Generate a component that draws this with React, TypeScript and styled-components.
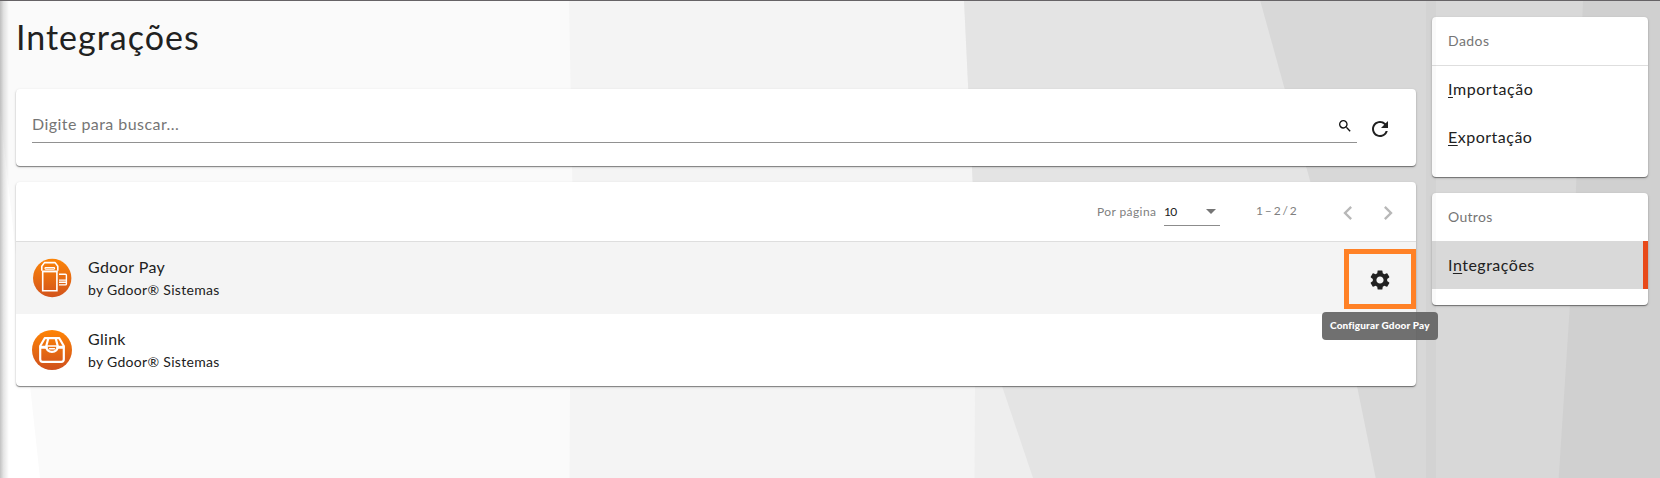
import React from "react";
import styled, { createGlobalStyle } from "styled-components";
import {
  MdArrowDropDown,
  MdChevronLeft,
  MdChevronRight,
  MdRefresh,
  MdSearch,
  MdSettings,
} from "react-icons/md";

const GlobalStyle = createGlobalStyle`
  * { box-sizing: border-box; }
  body {
    margin: 0;
    overflow: hidden;
    font-family: Lato, "Open Sans", sans-serif;
    color: #212121;
  }
`;

const Page = styled.div`
  position: relative;
  width: 1660px;
  height: 478px;
  overflow: hidden;
  border-top: 1px solid #666366;
  background: #fff;
`;

const Backdrop = styled.svg`
  position: absolute;
  top: -1px;
  left: 0;
  display: block;
`;

const EdgeShadow = styled.div`
  position: absolute;
  inset: 0 auto 0 0;
  width: 9px;
  background: linear-gradient(to right, rgba(0, 0, 0, 0.24), rgba(0, 0, 0, 0.1) 40%, rgba(0, 0, 0, 0));
`;

const SideShade = styled.div`
  position: absolute;
  top: 0;
  bottom: 0;
  left: 1426px;
  width: 10px;
  background: rgba(0, 0, 0, 0.018);
  pointer-events: none;
`;

const Columns = styled.div`
  position: relative;
  display: flex;
  gap: 16px;
  padding: 0 12px 0 16px;
`;

const Main = styled.main`
  width: 1400px;
  display: flex;
  flex-direction: column;
  gap: 16px;
`;

const Side = styled.aside`
  width: 216px;
  padding-top: 16px;
  display: flex;
  flex-direction: column;
  gap: 16px;
`;

const Text = styled.span<{ $size: number; $track?: number; $color?: string; $bold?: boolean }>`
  font-size: ${(p) => p.$size}px;
  line-height: 20px;
  letter-spacing: ${(p) => p.$track ?? 0}px;
  color: ${(p) => p.$color ?? "#212121"};
  font-weight: ${(p) => (p.$bold ? 900 : 400)};
  white-space: nowrap;
`;

const Title = styled.h1`
  margin: 0;
  height: 72px;
  padding: 16px 0 0;
  font-size: 34px;
  font-weight: 400;
  line-height: 40px;
  letter-spacing: 1px;
`;

const Card = styled.section`
  background: #fff;
  border-radius: 4px;
  box-shadow: 0 1px 1px rgba(0, 0, 0, 0.42), 0 1px 3px rgba(0, 0, 0, 0.16);
`;

const SearchCard = styled(Card)`
  height: 77px;
  padding: 20px 16px 0;
  display: flex;
`;

const SearchField = styled.div`
  width: 1325px;
  height: 34px;
  display: flex;
  justify-content: space-between;
  align-items: flex-start;
  padding: 5px 4px 0 0;
  border-bottom: 1px solid #919191;

  svg {
    margin-top: 4px;
  }
`;

const IconButton = styled.button<{ $left: number; $top: number }>`
  display: flex;
  align-self: flex-start;
  margin: ${(p) => p.$top}px 0 0 ${(p) => p.$left}px;
  padding: 0;
  border: 0;
  background: none;
  color: inherit;
`;

const Pager = styled.div`
  height: 60px;
  display: flex;
  justify-content: flex-end;
  align-items: flex-start;
  padding: 0 8px 0 0;
  border-bottom: 1px solid #dedede;
  color: #b8b8b8;
`;

const PagerLabel = styled.div`
  width: 67px;
  margin-top: 18px;
  line-height: 20px;
`;

const PageSize = styled.div`
  width: 56px;
  height: 26px;
  margin-top: 18px;
  display: flex;
  justify-content: space-between;
  border-bottom: 1px solid #8c8c8c;
  color: #757575;

  ${Text} {
    padding-top: 2px;
  }

  svg {
    margin: -1px -3px 0 0;
  }
`;

const Range = styled.div`
  width: 72px;
  margin: 17px 0 0 36px;
  line-height: 20px;
`;

const PagerArrow = styled.div`
  display: flex;
  width: 40px;
  margin-top: 17px;
  justify-content: center;
`;

const Row = styled.div<{ $active?: boolean }>`
  height: 72px;
  display: flex;
  align-items: center;
  padding-left: 16px;
  background: ${(p) => (p.$active ? "#f4f4f4" : "transparent")};
  border-radius: ${(p) => (p.$active ? "0" : "0 0 4px 4px")};
`;

const RowText = styled.div`
  flex: 1;
  display: flex;
  flex-direction: column;
  gap: 3px;
  margin-left: 16px;
  padding-top: 1px;
`;

const ActionHighlight = styled.div`
  position: relative;
  width: 72px;
  height: 60px;
  margin-top: 2px;
  padding-top: 2px;
  display: flex;
  align-items: center;
  justify-content: center;
  border: 5px solid #ff8126;
`;

const Tooltip = styled.div`
  position: absolute;
  z-index: 2;
  top: 58px;
  left: -27px;
  width: 116px;
  height: 28px;
  padding: 1px 0 0 8px;
  border-radius: 4px;
  background: rgba(97, 97, 97, 0.9);
`;

const SideHeader = styled.header<{ $line?: boolean }>`
  height: ${(p) => (p.$line ? 49 : 48)}px;
  padding: 13px 16px 0;
  line-height: 20px;
  border-bottom: ${(p) => (p.$line ? "1px solid #dedede" : "none")};
`;

const SideItem = styled.div<{ $active?: boolean }>`
  height: 48px;
  padding: ${(p) => (p.$active ? 14 : 13)}px 16px 0;
  line-height: 20px;
  background: ${(p) => (p.$active ? "#d9d9d9" : "transparent")};
  border-right: ${(p) => (p.$active ? "5px solid #e84a1a" : "none")};

  u {
    text-underline-offset: 1.5px;
    text-decoration-thickness: 1px;
    text-decoration-skip-ink: none;
  }
`;

const SideCard = styled(Card)<{ $height: number }>`
  height: ${(p) => p.$height}px;
`;

const PayLogo = () => (
  <svg width="40" height="40" viewBox="0 0 40 40">
    <defs>
      <linearGradient id="pay" x1="0" y1="0" x2="0" y2="1">
        <stop offset="0" stopColor="#fc8508" />
        <stop offset="1" stopColor="#d2531c" />
      </linearGradient>
    </defs>
    <circle cx="20.2" cy="20" r="19.2" fill="url(#pay)" />
    <g fill="none" stroke="#fff" strokeWidth="1.6">
      <path d="M10.7 13.5h14.2v19.3H10.7z" />
      <path d="M9.8 12.8V8.3l2.7-3.7h10.6l2.7 3.7v4.5" strokeLinejoin="round" />
      <path d="M10.2 13.4h15.2" />
      <rect x="13" y="9.6" width="9.6" height="1.6" rx=".6" strokeWidth="1.1" />
      <path d="M27 16.3h6.4q1 0 1 1v8.6q0 1-1 1H27M27 22.1h7.4M27 24.3h7.4" strokeWidth="1.4" />
    </g>
  </svg>
);

const LinkLogo = () => (
  <svg width="40" height="40" viewBox="0 0 40 40">
    <defs>
      <linearGradient id="link" x1="0" y1="0" x2="0" y2="1">
        <stop offset="0" stopColor="#ff8505" />
        <stop offset="1" stopColor="#cf501d" />
      </linearGradient>
    </defs>
    <circle cx="20" cy="20" r="20" fill="url(#link)" />
    <g fill="none" stroke="#fff" strokeWidth="2.2" strokeLinejoin="round" strokeLinecap="round">
      <path d="M12.7 8.2h14.6l4.5 7.8v13.3q0 2.6-2.6 2.6H10.8q-2.6 0-2.6-2.6V16z" />
      <path d="M9 17.2h5.3M25.7 17.2H31" strokeWidth="3" />
      <path d="M16.2 8.7l-2 7.6q.4 5.5 5.8 5.5t5.8-5.5l-2-7.6" />
      <path d="M14.5 16h11M17.5 18.8h5" strokeWidth="1.5" />
    </g>
  </svg>
);

export default function App() {
  return (
    <Page>
      <GlobalStyle />
      <Backdrop width="1660" height="478" viewBox="0 0 1660 478">
        <path fill="#fafafa" d="M0 0H1660V478H40L10 200 0 110z" />
        <path fill="#f4f4f4" d="M569 0H1660V478H569.5L570 386 573 220z" />
        <path fill="#eee" d="M964 0H1660V478H974.500L975 386 973.500 200z" />
        <path fill="#e4e4e4" d="M964 0H1660V478H1033L975 306 973.500 200z" />
        <path fill="#d8d8d8" d="M1260 0H1660V478H1375.700L1357 386 1332 260z" />
        <path fill="#d0d0d0" d="M1583 0H1660V478H1558.700L1574 242z" />
        <path fill="#666366" d="M0 0H1660V1H0z" />
      </Backdrop>
      <EdgeShadow />
      <Columns>
        <Main>
          <Title>Integrações</Title>
          <SearchCard>
            <SearchField>
              <Text $size={16} $track={0.45} $color="#757575">Digite para buscar...</Text>
              <MdSearch size={16} color="#111" />
            </SearchField>
            <IconButton $left={11} $top={8} aria-label="Atualizar">
              <MdRefresh size={24} />
            </IconButton>
          </SearchCard>
          <Card>
            <Pager>
              <PagerLabel>
                <Text $size={12} $track={0.4} $color="#808080">Por página</Text>
              </PagerLabel>
              <PageSize>
                <Text $size={12} $track={-0.6}>10</Text>
                <MdArrowDropDown size={24} />
              </PageSize>
              <Range>
                <Text $size={12} $track={-0.6} $color="#808080">1 – 2 / 2</Text>
              </Range>
              <PagerArrow><MdChevronLeft size={28} /></PagerArrow>
              <PagerArrow><MdChevronRight size={28} /></PagerArrow>
            </Pager>
            <Row $active>
              <PayLogo />
              <RowText>
                <Text $size={16} $track={0.4}>Gdoor Pay</Text>
                <Text $size={14} $track={0.3}>by Gdoor® Sistemas</Text>
              </RowText>
              <ActionHighlight>
                <MdSettings size={24} />
                <Tooltip>
                  <Text $size={10} $track={0.15} $color="#fff" $bold>Configurar Gdoor Pay</Text>
                </Tooltip>
              </ActionHighlight>
            </Row>
            <Row>
              <LinkLogo />
              <RowText>
                <Text $size={16} $track={0.3}>Glink</Text>
                <Text $size={14} $track={0.3}>by Gdoor® Sistemas</Text>
              </RowText>
            </Row>
          </Card>
        </Main>
        <Side>
          <SideCard $height={160}>
            <SideHeader $line>
              <Text $size={14} $track={0.45} $color="#757575">Dados</Text>
            </SideHeader>
            <SideItem>
              <Text $size={16} $track={0.55}><u>I</u>mportação</Text>
            </SideItem>
            <SideItem>
              <Text $size={16} $track={0.5}><u>E</u>xportação</Text>
            </SideItem>
          </SideCard>
          <SideCard $height={112}>
            <SideHeader>
              <Text $size={14} $track={0.3} $color="#757575">Outros</Text>
            </SideHeader>
            <SideItem $active>
              <Text $size={16} $track={0.5}>I<u>n</u>tegrações</Text>
            </SideItem>
          </SideCard>
        </Side>
      </Columns>
      <SideShade />
    </Page>
  );
}
